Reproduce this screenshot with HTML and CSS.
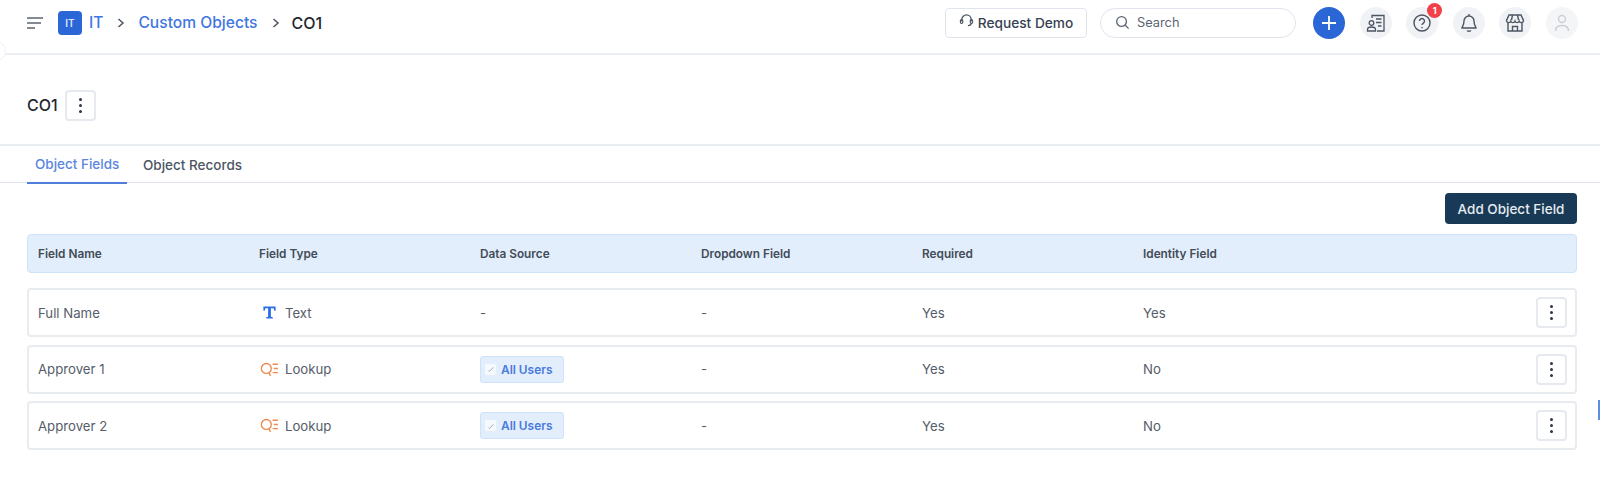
FILE: index.html
```html
<!DOCTYPE html>
<html lang="en">
<head>
<meta charset="utf-8">
<title>CO1 - Custom Objects</title>
<link rel="stylesheet" href="styles.css">
</head>
<body>
<span class="edge-bump"></span>
<span class="edge-tick"></span>
<header class="topbar">
  <div class="crumbs">
    <svg class="menu-icon" viewBox="0 0 16 12" width="16" height="12"><path d="M0 1h16M0 6h14M0 11h8" stroke="#5b6470" stroke-width="1.400" fill="none"/></svg>
    <span class="badge">IT</span>
    <a class="crumb link first">IT</a>
    <svg class="chev" viewBox="0 0 8 10" width="8" height="10"><path d="M1.500 1l4.500 4-4.500 4" stroke="#4b5563" stroke-width="1.500" fill="none"/></svg>
    <a class="crumb link">Custom Objects</a>
    <svg class="chev last" viewBox="0 0 8 10" width="8" height="10"><path d="M1.500 1l4.500 4-4.500 4" stroke="#4b5563" stroke-width="1.500" fill="none"/></svg>
    <span class="crumb current">CO1</span>
  </div>
  <div class="tools">
    <button class="demo">
      <svg viewBox="0 0 16 16" width="15" height="15"><path d="M3 9V7a5 5 0 0 1 10 0v2M13 11c0 1.500-1.500 2.500-3.500 2.500" stroke="#4b5563" stroke-width="1.400" fill="none"/><rect x="1.500" y="7" width="2.500" height="4" rx="1.200" fill="none" stroke="#4b5563" stroke-width="1.200"/><rect x="12" y="7" width="2.500" height="4" rx="1.200" fill="none" stroke="#4b5563" stroke-width="1.200"/></svg>
      Request Demo
    </button>
    <label class="search">
      <svg viewBox="0 0 16 16" width="15" height="15"><circle cx="7" cy="7" r="5.200" stroke="#5b6470" stroke-width="1.400" fill="none"/><path d="M11 11l3.500 3.500" stroke="#5b6470" stroke-width="1.400"/></svg>
      <span>Search</span>
    </label>
    <div class="round-group">
      <button class="round add"><svg viewBox="0 0 16 16" width="16" height="16"><path d="M8 1v14M1 8h14" stroke="#fff" stroke-width="1.800"/></svg></button>
      <button class="round"><svg viewBox="0 0 20 20" width="20" height="20" fill="none" stroke="#4b5563" stroke-width="1.300"><path d="M6 5V2.500h12V18h-7"/><path d="M10 6h5.500M10 9.500h5.500M12 13h3.500"/><circle cx="5.500" cy="10" r="2.300"/><path d="M1.500 18v-1.500c0-1.500 1.500-2.500 4-2.500s4 1 4 2.500V18z"/></svg></button>
      <button class="round"><svg viewBox="0 0 20 20" width="20" height="20" fill="none" stroke="#4b5563" stroke-width="1.400"><circle cx="10" cy="10" r="8"/><path d="M7.500 8a2.500 2.500 0 1 1 3.800 2.100c-.9.600-1.300 1-1.300 2"/><path d="M10 14v1.300"/></svg><span class="count">1</span></button>
      <button class="round"><svg viewBox="0 0 20 20" width="20" height="20" fill="none" stroke="#4b5563" stroke-width="1.400"><path d="M10 3a5 5 0 0 0-5 5c0 4-2 6-2 7h14c0-1-2-3-2-7a5 5 0 0 0-5-5zM10 1v2M8 17.500c.5 1 3.500 1 4 0"/></svg></button>
      <button class="round"><svg viewBox="0 0 20 20" width="20" height="20" fill="none" stroke="#4b5563" stroke-width="1.400"><path d="M4 2h12l2.500 5.500a2.200 2.200 0 0 1-4.300.6 2.200 2.200 0 0 1-4.200 0 2.200 2.200 0 0 1-4.200 0 2.200 2.200 0 0 1-4.300-.6z"/><path d="M3 10v8h14v-8"/><path d="M7.500 18v-4.500h5V18"/><path d="M7.500 2l-1 5M12.500 2l1 5"/></svg></button>
      <button class="round pale"><svg viewBox="0 0 20 20" width="20" height="20" fill="none" stroke="#c9ced8" stroke-width="1.400"><circle cx="10" cy="6" r="3.500"/><path d="M3.500 18c0-4 2.500-5.500 6.500-5.500s6.500 1.500 6.500 5.500"/></svg></button>
    </div>
  </div>
</header>

<section class="title-bar">
  <h1>CO1</h1>
  <button class="kebab"><i></i><i></i><i></i></button>
</section>

<nav class="tabs">
  <a class="tab active">Object Fields</a>
  <a class="tab">Object Records</a>
</nav>

<main class="content">
  <div class="actions"><button class="primary">Add Object Field</button></div>

  <div class="grid-row head">
    <span>Field Name</span><span>Field Type</span><span>Data Source</span><span>Dropdown Field</span><span>Required</span><span>Identity Field</span>
  </div>

  <div class="grid-row item">
    <span>Full Name</span>
    <span class="type"><svg class="type-icon text-icon" viewBox="0 0 16 16" width="15" height="15"><path d="M1.500 1.500h13v4.500h-1.300l-.9-2.500H9.500v9l2 .5V14.500h-7V13l2-.5v-9H3.700L2.800 6H1.500z" fill="#2a6fe8"/></svg>Text</span>
    <span>-</span><span>-</span><span>Yes</span><span>Yes</span>
    <button class="kebab"><i></i><i></i><i></i></button>
  </div>

  <div class="grid-row item">
    <span>Approver 1</span>
    <span class="type"><svg class="type-icon look-icon" viewBox="0 0 18 16" width="19" height="17" fill="none" stroke="#ee8a4f" stroke-width="1.300"><circle cx="6" cy="7" r="4.700"/><path d="M8.500 11l1.500 3M12 3h5M13 7h4M12 11h5"/></svg>Lookup</span>
    <span><span class="chip"><b><svg viewBox="0 0 10 10" width="8" height="8"><path d="M2 7l1 1 5-5" stroke="#8aa0c4" stroke-width="1.100" fill="none"/></svg></b>All Users</span></span>
    <span>-</span><span>Yes</span><span>No</span>
    <button class="kebab"><i></i><i></i><i></i></button>
  </div>

  <div class="grid-row item">
    <span>Approver 2</span>
    <span class="type"><svg class="type-icon look-icon" viewBox="0 0 18 16" width="19" height="17" fill="none" stroke="#ee8a4f" stroke-width="1.300"><circle cx="6" cy="7" r="4.700"/><path d="M8.500 11l1.500 3M12 3h5M13 7h4M12 11h5"/></svg>Lookup</span>
    <span><span class="chip"><b><svg viewBox="0 0 10 10" width="8" height="8"><path d="M2 7l1 1 5-5" stroke="#8aa0c4" stroke-width="1.100" fill="none"/></svg></b>All Users</span></span>
    <span>-</span><span>Yes</span><span>No</span>
    <button class="kebab"><i></i><i></i><i></i></button>
  </div>
</main>
</body>
</html>
```

FILE: styles.css
```css
* { box-sizing: border-box; }
html, body { margin: 0; height: 477px; overflow: hidden; background: #fff; }
body { font-family: Inter, "Liberation Sans", sans-serif; color: #4b5563; font-size: 13.200px; position: relative; }
button { font-family: inherit; background: #fff; padding: 0; cursor: pointer; }

.edge-bump { position: absolute; left: -14px; top: 41px; width: 20px; height: 20px; border-radius: 50%; background: #fff; border: 1px solid #eef1f5; }
.edge-tick { position: absolute; right: 0; top: 400px; width: 2px; height: 20px; background: #5b8de0; }

.topbar { height: 55px; border-bottom: 2px solid #eaeef3; display: flex; align-items: center; justify-content: space-between; padding: 0 22px 8px 27px; }
.crumbs { display: flex; align-items: center; }
.menu-icon { margin-right: 15px; }
.badge { width: 24px; height: 24px; border-radius: 4px; background: #2b66d6; color: #dbe6fa; font-size: 10px; font-weight: 600; display: flex; align-items: center; justify-content: center; margin-right: 7px; }
.crumb { font-size: 15.600px; font-weight: 500; line-height: 20px; }
.crumb.link { color: #3f76e0; }
.crumb.current { color: #23272e; font-size: 16px; }
.chev { margin: 0 13px 0 14px; }
.chev.last { margin: 0 12px 0 14px; }

.tools { display: flex; align-items: center; }
.demo { width: 142px; height: 30px; border: 1px solid #dfe4ec; border-radius: 4px; color: #374151; font-size: 13.700px; font-weight: 500; display: flex; align-items: center; justify-content: center; gap: 4px; margin-right: 13px; }
.demo svg { margin-top: -4px; }
.search { width: 196px; height: 30px; border: 1px solid #dfe4ec; border-radius: 15px; display: flex; align-items: center; gap: 7px; padding-left: 14px; color: #5b6470; font-size: 12.800px; margin-right: 17px; }
.round-group { display: flex; gap: 14.600px; }
.round { width: 32px; height: 32px; border-radius: 50%; border: 0; background: #f1f2f5; position: relative; display: flex; align-items: center; justify-content: center; }
.round.add { background: #2b66d6; }
.round.pale { background: #f4f5f7; }
.count { position: absolute; top: -4px; right: -4px; width: 15px; height: 15px; border-radius: 50%; background: #f2404a; color: #fff; font-size: 9px; font-weight: 700; display: flex; align-items: center; justify-content: center; }

.title-bar { height: 91px; border-bottom: 2px solid #e9ecf1; display: flex; align-items: center; gap: 7px; padding: 11px 0 0 27px; }
h1 { margin: 0; font-size: 16px; font-weight: 500; color: #23272e; }
.kebab { width: 31px; height: 31px; border: 2px solid #e6e9ef; border-radius: 4px; display: flex; flex-direction: column; align-items: center; justify-content: center; gap: 3px; }
.kebab i { width: 3px; height: 3px; border-radius: 50%; background: #2f3640; }

.tabs { height: 37px; border-bottom: 1px solid #dfe3ea; display: flex; padding-left: 27px; }
.tab { height: 38px; padding: 0 8px; display: flex; align-items: center; font-size: 13.500px; font-weight: 500; color: #4b5563; white-space: nowrap; }
.tab.active { color: #5a86e0; border-bottom: 2px solid #4f7edb; width: 100px; margin-right: 8px; }

.content { padding: 10px 23px 0 27px; }
.actions { display: flex; justify-content: flex-end; margin-bottom: 10px; }
.primary { width: 132px; height: 31px; background: #183a57; color: #e6ebf0; border: 0; border-radius: 4px; font-size: 13.500px; font-weight: 500; }

.grid-row { display: grid; grid-template-columns: repeat(6, 221px) 1fr; align-items: center; border-radius: 4px; }
.head { height: 39px; background: #e2eefc; border: 1px solid #cfe2fb; padding: 1px 0 0 10px; font-size: 11.800px; font-weight: 600; color: #434b57; margin-bottom: 15px; }
.item { height: 49px; border: 2px solid #e8ebf0; padding: 0 8px 0 9px; margin-bottom: 7.500px; color: #555d69; }
.item .kebab { justify-self: end; }
.type { display: flex; align-items: center; }
.text-icon { margin: 0 8px 0 3px; }
.look-icon { margin: 0 6px 0 1px; }
.chip { display: inline-flex; align-items: center; gap: 5px; height: 27px; width: 84px; padding-left: 4px; background: #e2eefc; border: 1px solid #cfe2fb; border-radius: 3px; font-size: 11.900px; font-weight: 600; color: #4a7bdd; }
.chip b { width: 11px; height: 11px; background: #f6f9fe; border-radius: 2px; display: flex; align-items: center; justify-content: center; }
```
